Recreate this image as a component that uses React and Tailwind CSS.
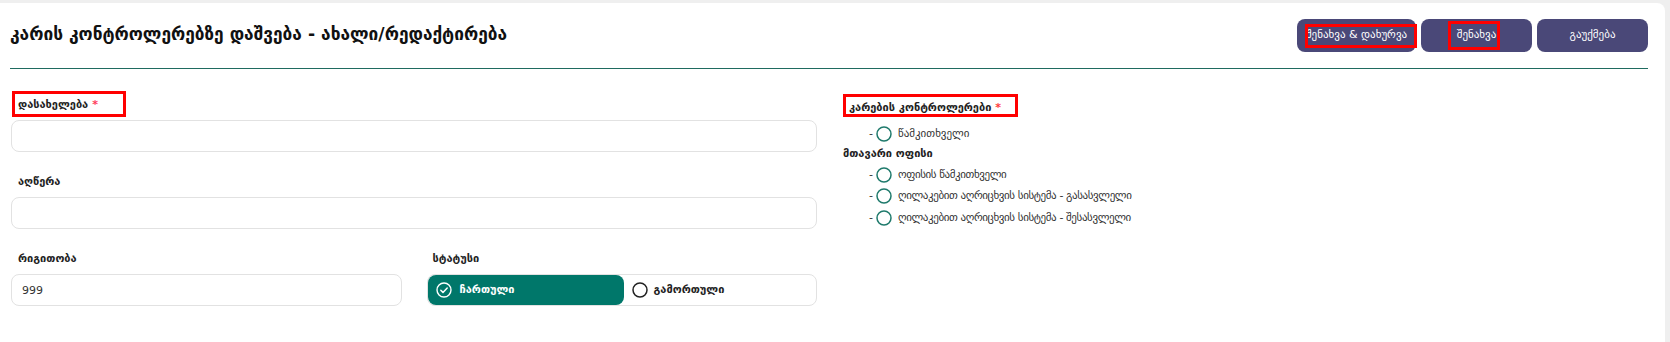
import React, { useState } from "react";

const geo = { fontFamily: '"DejaVu Sans", "Noto Sans", sans-serif' };

const RedBox = ({ className }) => (
  <div className={`pointer-events-none absolute border-[3px] border-[#ff0000] ${className}`} />
);

const RingIcon = ({ color = "#1f7a6c" }) => (
  <svg width="16" height="16" viewBox="0 0 16 16" className="shrink-0">
    <circle cx="8" cy="8" r="7" fill="none" stroke={color} strokeWidth="1.5" />
  </svg>
);

const CheckCircle = () => (
  <svg width="16" height="16" viewBox="0 0 16 16" className="shrink-0">
    <circle cx="8" cy="8" r="7" fill="none" stroke="#fff" strokeWidth="1.4" />
    <path d="M4.8 8.2l2.2 2.2 4.2-4.4" fill="none" stroke="#fff" strokeWidth="1.5" strokeLinecap="round" strokeLinejoin="round" />
  </svg>
);

const Field = ({ label, required, boxed, value, className = "" }) => (
  <div className={className}>
    <div className="relative pl-[7px] text-[11px] font-bold leading-4 text-[#222]">
      {label}
      {required && <span className="ml-1 text-[#ff3b5c]">*</span>}
      {boxed && <RedBox className="left-[1px] -top-[6px] w-[114px] h-[26px]" />}
    </div>
    <input
      defaultValue={value}
      className="mt-[7px] block h-[32px] w-full rounded-lg border border-[#e2e2e2] bg-white px-[10px] text-[11px] text-[#333] outline-none"
      style={geo}
    />
  </div>
);

const App = () => {
  const [active, setActive] = useState(true);

  const controllers = [
    "ოფისის წამკითხველი",
    "ღილაკებით აღრიცხვის სისტემა - გასასვლელი",
    "ღილაკებით აღრიცხვის სისტემა - შესასვლელი",
  ];

  return (
    <div className="min-h-screen bg-[#efefef] pt-[3px] pr-[5px]" style={geo}>
      <div className="min-h-[339px] rounded-tr-lg bg-white">
        {/* Header */}
        <div className="mx-[10px] mr-[17px] flex items-center justify-between border-b border-[#1f6b60] pt-4 pb-[16px]">
          <h1 className="mb-[4px] text-[17.3px] font-bold leading-6 text-[#111]">
            კარის კონტროლერებზე დაშვება - ახალი/რედაქტირება
          </h1>
          <div className="flex gap-[5px]">
            <button className="relative h-[33px] w-[119px] rounded-lg bg-[#4a4878] text-[11px] text-white">
              შენახვა & დახურვა
              <RedBox className="left-[8px] top-[5px] w-[112px] h-[24px]" />
            </button>
            <button className="relative h-[33px] w-[111px] rounded-lg bg-[#4a4878] text-[11px] text-white">
              შენახვა
              <RedBox className="left-[27px] top-[2px] w-[52px] h-[29px]" />
            </button>
            <button className="h-[33px] w-[111px] rounded-lg bg-[#4a4878] text-[11px] text-white">
              გაუქმება
            </button>
          </div>
        </div>

        {/* Body */}
        <div className="flex pl-[11px] pt-[28px]">
          <div className="w-[806px]">
            <Field label="დასახელება" required boxed />
            <Field label="აღწერა" className="mt-[22px]" />
            <div className="mt-[22px] grid grid-cols-2 gap-[25px]">
              <Field label="რიგითობა" value="999" />
              <div>
                <div className="pl-[6px] text-[11px] font-bold leading-4 text-[#222]">სტატუსი</div>
                <div className="mt-[7px] flex h-[32px] rounded-lg border border-[#e2e2e2]">
                  <button
                    onClick={() => setActive(true)}
                    className={`flex w-[196px] items-center gap-[8px] rounded-lg pl-[8px] text-[11px] font-bold ${
                      active ? "bg-[#00776a] text-white" : "text-[#222]"
                    }`}
                  >
                    {active ? <CheckCircle /> : <RingIcon color="#222" />}
                    ჩართული
                  </button>
                  <button
                    onClick={() => setActive(false)}
                    className="flex items-center gap-[6px] pl-[8px] text-[11px] font-bold text-[#222]"
                  >
                    <RingIcon color="#222" />
                    გამორთული
                  </button>
                </div>
              </div>
            </div>
          </div>

          <div className="ml-[26px] pt-[3px]">
            <div className="relative pl-[6px] text-[11px] font-bold leading-4 text-[#222]">
              კარების კონტროლერები <span className="text-[#ff3b3b]">*</span>
              <RedBox className="left-0 -top-[6px] w-[175px] h-[23px]" />
            </div>
            <div className="mt-[10px] flex items-center gap-[3px] pl-[26px] text-[11px] text-[#333]">
              -<RingIcon />
              <span className="ml-[3px]">წამკითხველი</span>
            </div>
            <div className="mt-[3px] text-[11px] font-bold leading-4 text-[#222]">მთავარი ოფისი</div>
            <div className="mt-[5px] flex flex-col gap-[5px]">
              {controllers.map((name) => (
                <div key={name} className="flex items-center gap-[3px] pl-[26px] text-[11px] text-[#333]">
                  -<RingIcon />
                  <span className="ml-[3px] tracking-[-0.4px]">{name}</span>
                </div>
              ))}
            </div>
          </div>
        </div>
      </div>
    </div>
  );
};

export default App;
